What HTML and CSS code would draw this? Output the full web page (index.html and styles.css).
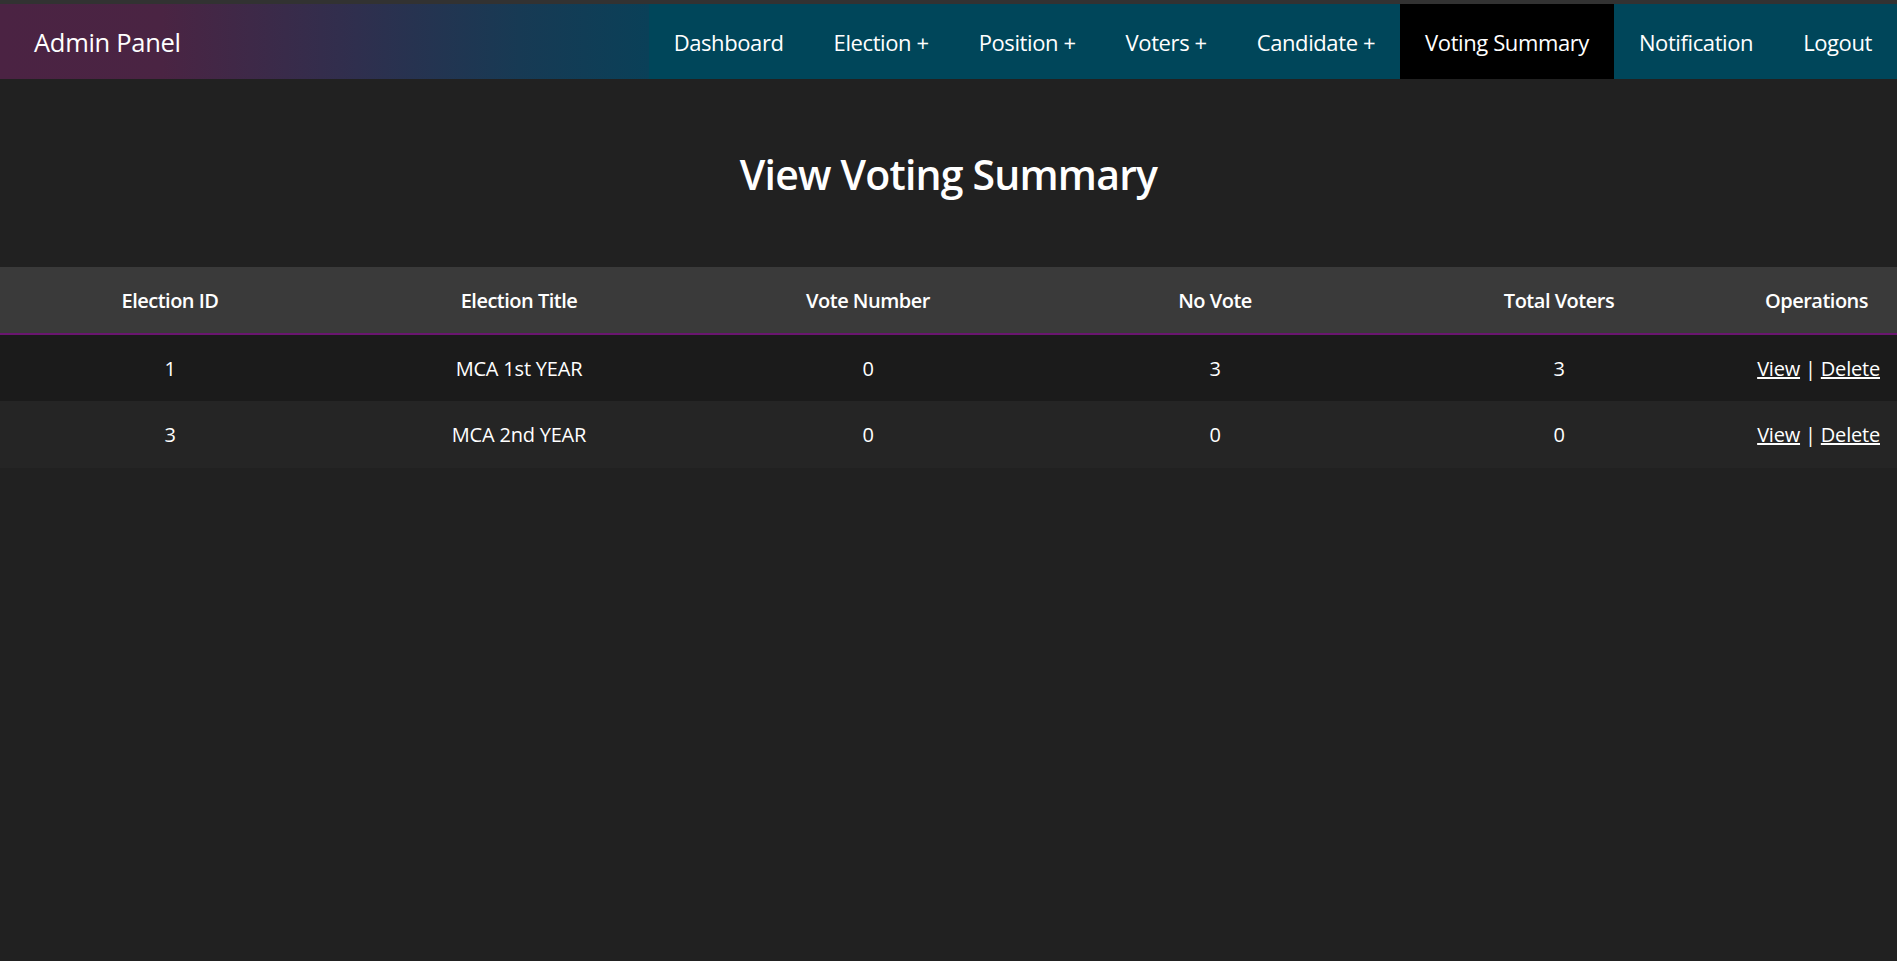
FILE: index.html
```html
<!DOCTYPE html>
<html lang="en">
<head>
<meta charset="utf-8">
<title>Admin Panel - Voting Summary</title>
<link rel="stylesheet" href="styles.css">
</head>
<body>
<div class="topstrip"></div>
<nav class="navbar">
  <div class="brand">Admin Panel</div>
  <ul class="menu">
    <li><a href="#">Dashboard</a></li>
    <li><a href="#">Election +</a></li>
    <li><a href="#">Position +</a></li>
    <li><a href="#">Voters +</a></li>
    <li><a href="#">Candidate +</a></li>
    <li class="active"><a href="#">Voting Summary</a></li>
    <li><a href="#">Notification</a></li>
    <li><a href="#">Logout</a></li>
  </ul>
</nav>
<main>
  <h1 class="title">View Voting Summary</h1>
  <table class="summary">
    <thead>
      <tr>
        <th class="c1">Election ID</th>
        <th class="c2">Election Title</th>
        <th class="c3">Vote Number</th>
        <th class="c4">No Vote</th>
        <th class="c5">Total Voters</th>
        <th class="c6">Operations</th>
      </tr>
    </thead>
    <tbody>
      <tr>
        <td>1</td>
        <td>MCA 1st YEAR</td>
        <td>0</td>
        <td>3</td>
        <td>3</td>
        <td class="ops"><a href="#">View</a> | <a href="#">Delete</a></td>
      </tr>
      <tr>
        <td>3</td>
        <td>MCA 2nd YEAR</td>
        <td>0</td>
        <td>0</td>
        <td>0</td>
        <td class="ops"><a href="#">View</a> | <a href="#">Delete</a></td>
      </tr>
    </tbody>
  </table>
</main>
</body>
</html>
```
FILE: styles.css
```css
* { box-sizing: border-box; }
html, body {
  margin: 0;
  padding: 0;
  background: #212121;
  color: #ffffff;
  font-family: "Open Sans", "Noto Sans", sans-serif;
}
.topstrip {
  height: 4px;
  background: #323232;
}
.navbar {
  display: flex;
  align-items: stretch;
  height: 75px;
  background: #00465a;
}
.brand {
  flex: 1;
  display: flex;
  align-items: center;
  padding-left: 34px;
  font-size: 25.5px;
  letter-spacing: -0.3px;
  background: linear-gradient(90deg, #4b2343 0%, #4a2443 25%, #2f2f4e 55%, #173a54 80%, #0a4058 100%);
}
.menu {
  display: flex;
  list-style: none;
  margin: 0;
  padding: 0;
  background: #00465a;
}
.menu li {
  display: flex;
}
.menu li a {
  display: flex;
  align-items: center;
  padding: 0 25px;
  color: #ffffff;
  text-decoration: none;
  font-size: 22px;
  letter-spacing: -0.4px;
}
.menu li.active a {
  background: #000000;
}
.title {
  margin: 0;
  padding: 65px 0 0;
  text-align: center;
  font-size: 41px;
  font-weight: 600;
  line-height: 60px;
  letter-spacing: -0.8px;
}
.summary {
  margin-top: 63px;
  width: 100%;
  border-collapse: collapse;
  table-layout: fixed;
}
.summary th {
  height: 67px;
  background: #3a3a3a;
  font-size: 20px;
  font-weight: 600;
  letter-spacing: -0.5px;
  border-bottom: 2px solid #6a1670;
}
.summary th.c6 {
  padding-left: 11px;
}
.summary td {
  height: 67px;
  text-align: center;
  font-size: 20px;
  letter-spacing: -0.2px;
}
.summary tbody tr:nth-child(odd) { background: #1b1b1b; }
.summary tbody tr:nth-child(even) { background: #252525; }
.c1 { width: 340px; }
.c2 { width: 358px; }
.c3 { width: 340px; }
.c4 { width: 354px; }
.c5 { width: 334px; }
.summary td.ops {
  text-align: right;
  padding-right: 17px;
}
.ops a {
  color: #ffffff;
}
```
